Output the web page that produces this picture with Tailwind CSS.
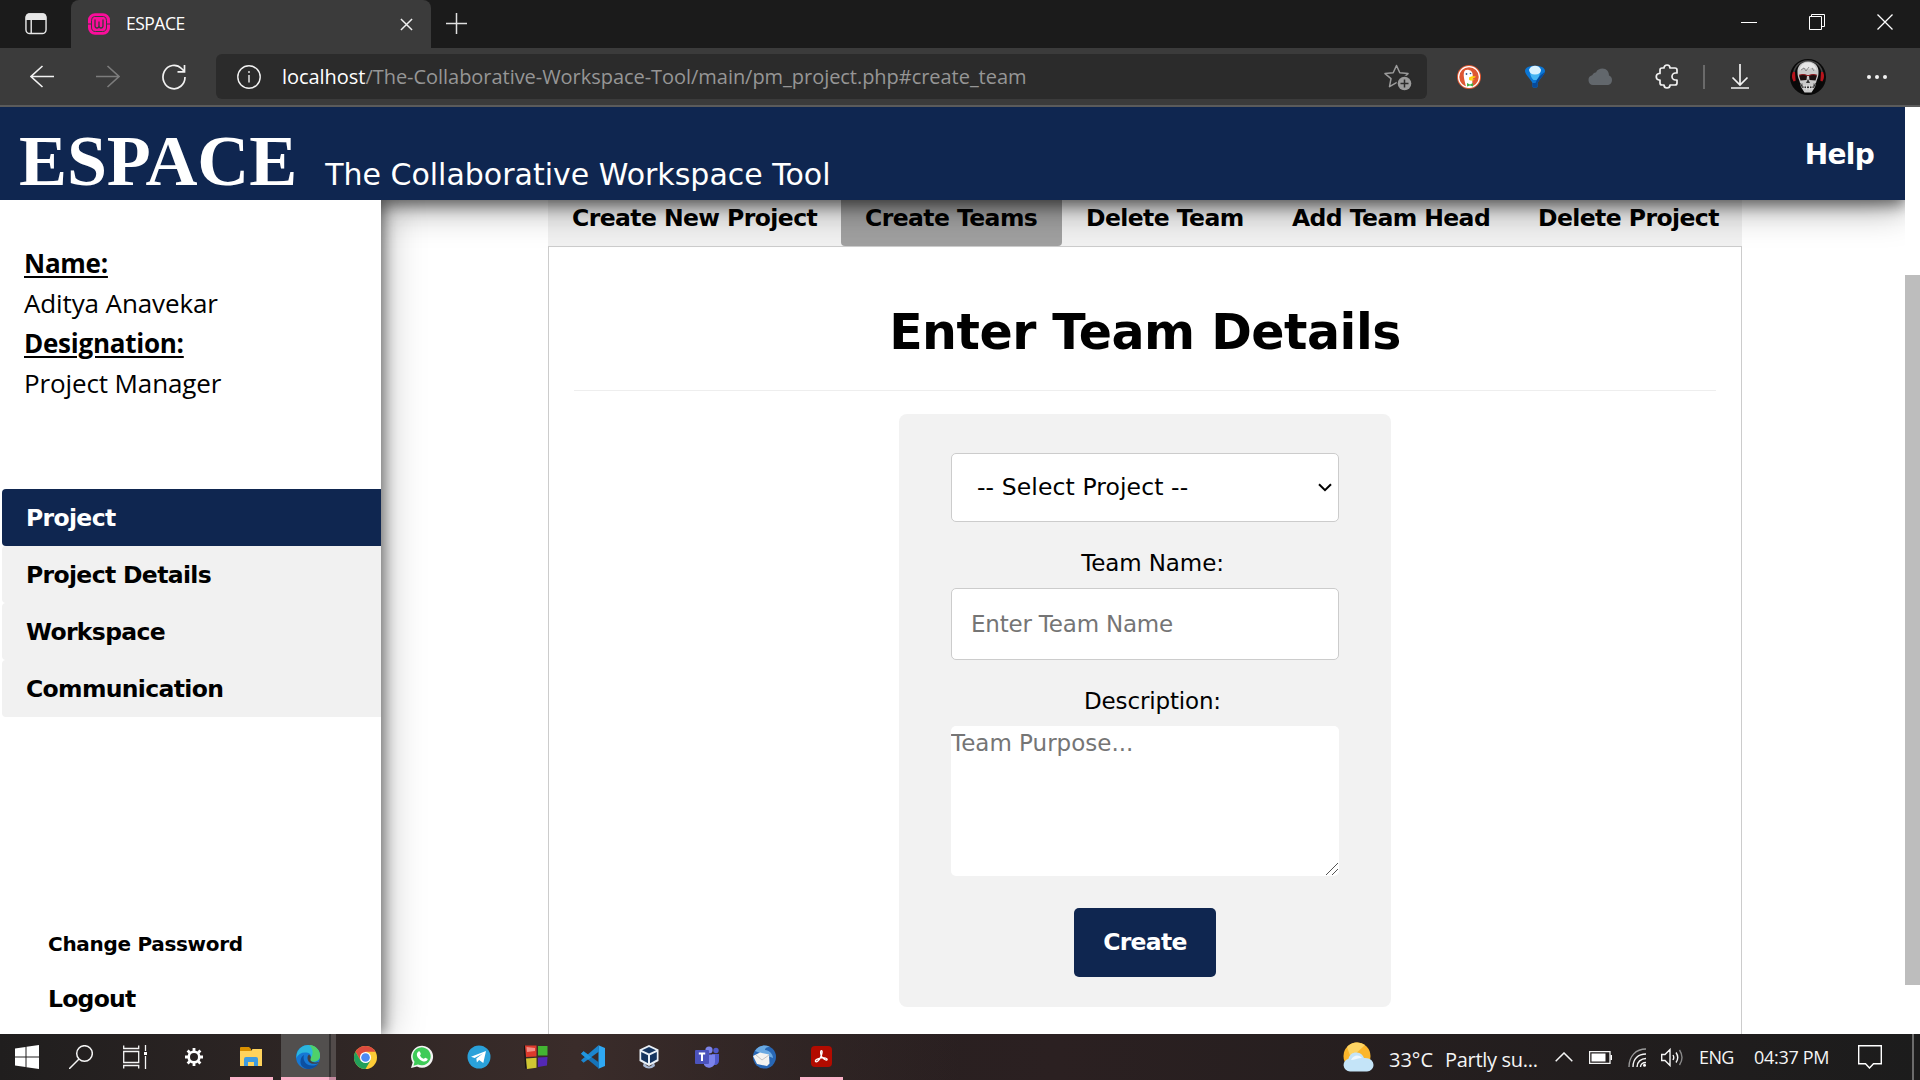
<!DOCTYPE html>
<html lang="en">
<head>
<meta charset="utf-8">
<title>ESPACE</title>
<script src="https://cdn.jsdelivr.net/npm/@tailwindcss/browser@4"></script>
</head>
<body class="h-[1080px] w-[1920px] overflow-hidden bg-white font-['DejaVu_Sans',sans-serif] text-black">
<div class="flex h-full flex-col">

  <!-- Browser tab strip -->
  <div class="flex h-12 shrink-0 bg-[#1b1b1b] font-['Open_Sans',sans-serif]">
    <div class="flex w-[71px] items-center pl-[25px]">
      <svg class="h-[22px] w-[22px]" viewBox="0 0 23 23" fill="none" stroke="#e6e6e6" stroke-width="1.5"><rect x="1" y="1" width="21" height="20.5" rx="4"/><path d="M1.500 4a3 3 0 0 1 3-3h14a3 3 0 0 1 3 3v2.500h-20z" fill="#e6e6e6"/><path d="M6.500 6v15.500"/></svg>
    </div>
    <div class="flex w-[360px] items-center rounded-t-lg bg-[#3b3b3b] pr-[18px] pb-px pl-4">
      <svg class="h-6 w-6" viewBox="0 0 24 24" fill="none"><path d="M8 1.200h8a7 7 0 0 1 7 7v7.600a7 7 0 0 1-7 7H8a7 7 0 0 1-7-7V8.200a7 7 0 0 1 7-7z" fill="#fb0d9b"/><path d="M7.500 4.500h9q3 0 3 4v6.500q0 4.500-4 4.500h-7q-4 0-4-4.500V8.500q0-4 3-4z" stroke="#3b3b3b" stroke-width="1"/><path d="M8 7.500v6q0 2.500 2 2.500t2-2.500v-4 4q0 2.500 2 2.500t2-2.500v-6" stroke="#3b3b3b" stroke-width="1.300"/><path d="M0 12h4.500M19.500 12H24" stroke="#3b3b3b" stroke-width="1"/></svg>
      <span class="ml-[15px] grow text-[17.5px] tracking-[-0.5px] text-white">ESPACE</span>
      <svg class="mt-px h-[13px] w-[13px]" viewBox="0 0 14 14" stroke="#f0f0f0" stroke-width="1.600"><path d="M1 1l12 12M13 1L1 13"/></svg>
    </div>
    <div class="flex grow items-center pb-px pl-[15px]">
      <svg class="h-[21px] w-[21px]" viewBox="0 0 21 21" stroke="#e0e0e0" stroke-width="1.500"><path d="M10.500 0v21M0 10.500h21"/></svg>
    </div>
    <div class="flex items-center gap-[52px] pr-[27px] pb-[5px]">
      <svg class="h-4 w-4" viewBox="0 0 16 16" stroke="#fff"><path d="M0 8.500h16"/></svg>
      <svg class="h-4 w-4" viewBox="0 0 16 16" stroke="#fff" fill="none"><path d="M.5 2.500h12v13H.5zM2.500 2.500V.5h13v12h-3"/></svg>
      <svg class="h-4 w-4" viewBox="0 0 16 16" stroke="#fff" stroke-width="1.300"><path d="M.5.5l15 15M15.500.5l-15 15"/></svg>
    </div>
  </div>

  <!-- Browser toolbar -->
  <div class="flex h-[59px] shrink-0 items-center border-b-2 border-[#5b5b5b] bg-[#3b3b3b] font-['Open_Sans',sans-serif]">
    <div class="flex w-[216px] items-center pl-[30px]">
      <svg class="h-6 w-6" viewBox="0 0 24 24" fill="none" stroke="#f2f2f2" stroke-width="1.600"><path d="M24 11.500H1M12.500 1L1 11.500l11.500 10.500"/></svg>
      <svg class="ml-[42px] h-6 w-6" viewBox="0 0 24 24" fill="none" stroke="#7c7c7c" stroke-width="1.600"><path d="M0 11.500h23M11.500 1L23 11.500 11.500 22"/></svg>
      <svg class="ml-[42px] h-[26px] w-6" viewBox="0 0 24 26" fill="none" stroke="#f2f2f2" stroke-width="1.700"><path d="M23 13a11 11.700 0 1 1-3.500-8.500L22.500 7.500M22.500 1v6.800h-7"/></svg>
    </div>
    <div class="flex h-[45px] w-[1211px] items-center rounded-md bg-[#2b2b2b] pr-[15px] pl-[21px]">
      <svg class="h-6 w-6" viewBox="0 0 24 24" fill="none" stroke="#f2f2f2" stroke-width="1.400"><circle cx="12" cy="12" r="11.200"/><path d="M12 10v7.500"/><circle cx="12" cy="7" r=".6" fill="#f2f2f2" stroke-width=".8"/></svg>
      <span class="ml-[21px] grow text-[20px] tracking-[-0.04px] text-[#969696]"><span class="text-white">localhost</span>/The-Collaborative-Workspace-Tool/main/pm_project.php#create_team</span>
      <svg class="h-7 w-7" viewBox="0 0 28 28" fill="none"><path d="M12.500 2.500l3.300 7.200 8.200.9-6 5.500 1.500 7.500-7-4-7 4 1.500-8L1 10.600l8.200-.9z" stroke="#9b9b9b" stroke-width="1.500" stroke-linejoin="round"/><circle cx="20.500" cy="20.500" r="8" fill="#2b2b2b"/><circle cx="20.500" cy="20.500" r="6.800" fill="#9b9b9b"/><path d="M20.500 16.500v8M16.500 20.500h8" stroke="#2b2b2b" stroke-width="1.500"/></svg>
    </div>
    <div class="flex grow items-center pl-[30px]">
      <svg class="h-6 w-6" viewBox="0 0 24 24"><circle cx="12" cy="12" r="12" fill="#de5833"/><circle cx="12" cy="12" r="10.400" fill="none" stroke="#fff" stroke-width="1.300"/><path d="M9 21.800C8 17 6 11 7 7.500 7.500 5 9.500 4.500 12 5c3 .7 4 3 3.700 6-.2 3-.7 6-.2 11-2 .7-4.500.6-6.500-.2z" fill="#fff"/><circle cx="9.500" cy="9" r=".9" fill="#2d5a91"/><circle cx="13.500" cy="8.500" r=".8" fill="#2d5a91"/><path d="M12 12.500c2-1.300 5-1.500 7-.8-1 1.300-4 1.800-5 2.300 1.500.6 3 .3 4 .6-2 1.600-5.500 1-6 0z" fill="#fdd20a"/><path d="M10 18l3 1.500 3-1.500v3.500l-3-1-3 1z" fill="#43b045"/></svg>
      <svg class="ml-11 h-6 w-5" viewBox="0 0 20 24"><path d="M0 6C0 2.500 4.500.8 10 .8S20 2.500 20 6c0 3.500-5.500 8-7.500 12v3.500q0 1-1 1h-3q-1 0-1-1V18C5.500 14 0 9.500 0 6z" fill="#0b76d4"/><path d="M4 4.500C5.500 1.800 7.500.8 10 .8s4.500 1 6 3.700C16 8 13 11 10 11S4.500 8 4 4.500z" fill="#d9f2ff"/><path d="M5 8q5 3 10 0-1 5-3.500 7h-3Q6 13 5 8z" fill="#45b4f2"/><path d="M19.800 7c-.8 3.200-5.500 7.500-7.300 11v3.500q0 1-1 1h-3q-1 0-1-1V18h3q2-6 9.300-11z" fill="#074a9b"/></svg>
      <svg class="ml-[43px] h-6 w-6" viewBox="0 0 24 24" fill="#62676c"><path d="M5 20a5 5 0 0 1-.8-9.800C5.500 8 7 7.500 8 7.500c1-3 4-4 6.500-4 4 0 6.500 3 6.500 7 2 .8 3 2.500 3 4.500 0 3-2 5-5 5z"/></svg>
      <svg class="ml-[43px] h-[25px] w-6" viewBox="0 0 24 25" fill="none" stroke="#f2f2f2" stroke-width="1.700" stroke-linejoin="round"><path d="M9 4a3 3 0 1 1 6 0h5q2 0 2 2v3h-1.500a3.500 3.500 0 0 0 0 7H22v3q0 2-2 2h-5a3 3 0 1 1-6 0H7q-2 0-2-2v-3H4a3.300 3.300 0 0 1 0-6.500h1V6q0-2 2-2z"/></svg>
      <div class="ml-6 h-6 w-[2px] bg-[#6a6a6a]"></div>
      <svg class="ml-[25px] h-[25px] w-5" viewBox="0 0 20 25" fill="none" stroke="#f2f2f2" stroke-width="1.700"><path d="M10 0v20.500M2.500 13.500l7.500 7.500 7.500-7.500M1 24h18"/></svg>
      <svg class="ml-10 h-9 w-9" viewBox="0 0 36 36"><circle cx="18" cy="18" r="18" fill="#090909"/><path d="M4 20C2 10 8 2 18 2s16 8 14 18" fill="none" stroke="#444" stroke-width="1.500"/><path d="M2.800 13q-2 5.500.8 9.500l2-.8-.6-8.700zM33.200 13q2 5.500-.8 9.500l-2-.8.6-8.700z" fill="#b7141c"/><path d="M18 2.500c7 0 11 5 10.500 11 0 3-.5 5-2 8.500l-1.500 6-3.500 5.500h-7L11 28l-1.500-6c-1.500-3.500-2-5.500-2-8.500C7 7.500 11 2.500 18 2.500z" fill="#c9c9c9"/><path d="M18 3.500c5 0 8 3.500 8.500 8l-4-3-4.500 2-4.500-2-4 3c.5-4.500 3.500-8 8.500-8z" fill="#e6e6e6"/><path d="M9 16.500q4-2 8 0l-.5 4.500-6 .5zM27 16.500q-4-2-8 0l.5 4.500 6 .5z" fill="#1a1010"/><path d="M18 20l-2 4h4zM9.500 23l4 4.500h9l4-4.500-2.500 6h-12z" fill="#333"/><path d="M9 16.200q4.500-1.500 8 .3h2q4-1.800 8-.3" fill="none" stroke="#8d1a1f" stroke-width="1.200"/><path d="M14 26v4M16.500 26v5M19.500 26v5M22 26v4" stroke="#ddd" stroke-width="1"/><path d="M11 11l3-2 2 3 3-4M22 9l2 3M12 24l1 5M24 24l-1 5" fill="none" stroke="#777" stroke-width=".8"/></svg>
      <svg class="ml-[41px] h-1 w-5" viewBox="0 0 20 4" fill="#f2f2f2"><circle cx="2" cy="2" r="2"/><circle cx="10" cy="2" r="2"/><circle cx="18" cy="2" r="2"/></svg>
    </div>
  </div>

  <!-- Web page -->
  <div class="flex min-h-0 grow overflow-hidden">
    <div class="flex w-[1905px] flex-col overflow-hidden">
      <header class="relative z-10 flex h-[93px] shrink-0 justify-between bg-[#0f2650] pr-[31px] pl-[19px] text-white shadow-[0_5px_14px_rgba(0,0,0,.5),0_8px_36px_rgba(0,0,0,.36)]">
        <div class="flex items-baseline">
          <span class="font-['Liberation_Serif',serif] text-[72px] leading-[108px] font-bold tracking-[-0.1px]">ESPACE</span>
          <span class="ml-[28px] text-[30px]">The Collaborative Workspace Tool</span>
        </div>
        <a class="text-[28px] leading-[96px] font-bold tracking-[-0.7px]">Help</a>
      </header>

      <div class="flex min-h-0 grow">
        <!-- Sidebar -->
        <aside class="relative z-20 flex w-[381px] shrink-0 flex-col bg-white pt-[43px] shadow-[4px_0_12px_rgba(0,0,0,.42),6px_0_36px_rgba(0,0,0,.25)] [clip-path:inset(0_-80px_0_0)]">
          <div class="h-[246px] pl-6 font-['Open_Sans',sans-serif] text-[26px] leading-10 tracking-[-0.12px]">
            <p class="font-bold tracking-[-0.25px] underline decoration-2 underline-offset-[3px]">Name:</p>
            <p>Aditya Anavekar</p>
            <p class="font-bold tracking-[-0.25px] underline decoration-2 underline-offset-[3px]">Designation:</p>
            <p>Project Manager</p>
          </div>
          <nav class="flex flex-col pl-[2px] text-[23.5px] leading-[58px] font-bold tracking-[-0.66px]">
            <a class="h-[57px] rounded-l bg-[#0f2650] pl-6 text-white">Project</a>
            <a class="h-[57px] rounded-l bg-[#f1f1f1] pl-6">Project Details</a>
            <a class="h-[57px] rounded-l bg-[#f1f1f1] pl-6">Workspace</a>
            <a class="h-[57px] rounded-l bg-[#f1f1f1] pl-6">Communication</a>
          </nav>
          <div class="mt-auto flex flex-col pb-[7px] pl-12 font-bold">
            <a class="text-[20px] leading-[54px] tracking-[-0.3px]">Change Password</a>
            <a class="text-[23.5px] leading-[56px] tracking-[-0.75px]">Logout</a>
          </div>
        </aside>

        <!-- Content -->
        <main class="ml-[167px] flex w-[1194px] flex-col">
          <div class="flex h-[46px] shrink-0 bg-[#f1f1f1] text-[23.5px] leading-9 font-bold tracking-[-0.58px]">
            <a class="w-[293px] pl-6">Create New Project</a>
            <a class="w-[221px] rounded-b bg-[#a0a0a0] pl-6">Create Teams</a>
            <a class="w-[206px] pl-6">Delete Team</a>
            <a class="w-[246px] pl-6">Add Team Head</a>
            <a class="pl-6">Delete Project</a>
          </div>
          <section class="grow border border-b-0 border-[#ccc] px-[25px] pt-[56px]">
            <h1 class="text-center text-[49px] leading-[60px] font-bold tracking-[-0.5px]">Enter Team Details</h1>
            <hr class="mt-[27px] border-[#eee]">
            <form class="mx-auto mt-[23px] flex h-[593px] w-[492px] flex-col items-center rounded-lg bg-[#f2f2f2] pt-[39px] text-[23px]">
              <div class="relative">
                <select class="block h-[69px] w-[388px] appearance-none rounded-[5px] border border-[#ccc] bg-white pt-px pl-[25px] text-[23.5px] tracking-[0.1px]"><option>-- Select Project --</option></select>
                <svg class="absolute top-[30px] right-[7px] h-[9px] w-[14px]" viewBox="0 0 14 9" fill="none" stroke="#000" stroke-width="2"><path d="M1 1.200l6 6 6-6"/></svg>
              </div>
              <label class="flex h-[66px] items-center pt-[16px] pl-[15px] tracking-[-0.1px]">Team Name:</label>
              <input class="block h-[72px] w-[388px] rounded-[5px] border border-[#ccc] bg-white pl-[19px] tracking-[-0.2px] placeholder-[#757575]" placeholder="Enter Team Name">
              <label class="flex h-[66px] items-center pt-[16px] pl-[15px] tracking-[-0.15px]">Description:</label>
              <div class="relative">
                <textarea class="block h-[150px] w-[388px] resize-none rounded-[5px] bg-white placeholder-[#757575]" placeholder="Team Purpose..."></textarea>
                <svg class="absolute right-px bottom-px h-3 w-3" viewBox="0 0 12 12" fill="none" stroke="#555"><path d="M0 12L12 0M6 12l6-6"/></svg>
              </div>
              <button type="button" class="mt-8 h-[69px] w-[142px] rounded-[5px] bg-[#0f2650] pt-px text-[23.5px] font-bold tracking-[-0.7px] text-white">Create</button>
            </form>
          </section>
        </main>
      </div>
    </div>
    <!-- Page scrollbar -->
    <div class="w-[15px] bg-white pt-[168px]"><div class="h-[709.5px] bg-[#bdbdbd]"></div></div>
  </div>

  <!-- Taskbar -->
  <div class="flex h-[46px] shrink-0 bg-linear-to-r from-[#1e1c1c] via-[#2b2021] via-55% to-[#1c1c1c] font-['Open_Sans',sans-serif] text-[#f5f5f5]">
    <div class="flex w-full bg-linear-to-r from-[#201e1e] from-0% via-[#3a2c2a] via-30% to-transparent to-50%">
      <div class="flex w-[230px] items-center pl-[15px]">
        <svg class="h-6 w-6" viewBox="0 0 24 24" fill="#fff"><path d="M0 3.500l10.500-1.500v9.500H0zM11.500 1.800L24 0v11.500H11.500zM0 12.500h10.500V22L0 20.500zM11.500 12.500H24V24l-12.500-1.800z"/></svg>
        <svg class="ml-[30px] h-6 w-6" viewBox="0 0 24 24" fill="none" stroke="#f5f5f5" stroke-width="1.500"><circle cx="15.500" cy="8.500" r="7.800"/><path d="M10 14L0 24"/></svg>
        <svg class="ml-[30px] h-6 w-6" viewBox="0 0 24 24" fill="none" stroke="#f5f5f5" stroke-width="1.300"><path d="M.7.5v3h15v-3M.7 6.500h15v11H.7zM.7 23.500v-3h15v3M22.500 0v6M22.500 11v13"/><path d="M21 7h3v3h-3z" fill="#fff" stroke="none"/></svg>
        <svg class="ml-[38px] h-[18px] w-[18px]" viewBox="0 0 18 18" fill="none" stroke="#fff"><circle cx="9" cy="9" r="5.300" stroke-width="2.600"/><path d="M9 0v3M9 15v3M0 9h3M15 9h3M2.600 2.600l2.200 2.200M13.200 13.200l2.200 2.200M2.600 15.400l2.200-2.200M13.200 4.800l2.200-2.200" stroke-width="2.800"/></svg>
      </div>
      <div class="flex w-[43px] items-center justify-center border-b-[3px] border-[#fbb1c8] pt-[2px] pr-[2px]">
        <svg class="h-[19px] w-[22px]" viewBox="0 0 22 19"><path d="M0 1q0-1 1-1h8l2 2v3H0z" fill="#d99000"/><path d="M0 4h11l1.500-2H22v17H0z" fill="#ffd35c"/><path d="M4 19v-7q0-2 2-2h10q2 0 2 2v7h-4v-4H8v4z" fill="#3f9be0"/></svg>
      </div>
      <div class="ml-2 flex w-12 items-center justify-center border-b-[3px] border-[#fbb1c8] bg-[#524f4e] pt-[3px] pl-[6px]">
        <svg class="h-6 w-6" viewBox="0 0 24 24"><circle cx="12" cy="12" r="12" fill="#1678d4"/><path d="M1 8C3 3 7 0 12 0c7 0 12 5 12 10.500 0 4-3 6-6.500 6-3 0-4.500-1.200-3-3 1.500-2.500 0-5.500-4-6C6 7 2 9 .3 13z" fill="#2bb6dd"/><path d="M13 0c7 .5 11 5 11 10.500 0 4-3 6-6.500 6-3 0-4.500-1.200-3-3C18 9 17 3 13 0z" fill="#4fd16a"/><path d="M8 10c-2 6 3 11 8.500 10.500 2.500 0 4-.7 5.500-1.500-2 3.500-6 5-10 5-5-.5-8-4-7.500-8C4.800 13 6 11 8 10z" fill="#0c4fa0"/><path d="M13 9.500c-2 1.500-2 5 0 7.500 2 2 6 2.500 9.500 1l.5-1c-2 .8-9 1-8.500-3 .5-1.500.5-3-1.500-4.500z" fill="#434142"/></svg>
      </div>
      <div class="w-[2px] border-b-[3px] border-[#c58ba0] bg-[#343131]"></div>
      <div class="w-[5px] border-b-[3px] border-[#c58ba0] bg-[#524b4a]"></div>
      <div class="flex w-[464px] items-center pl-[18px]">
        <svg class="h-[23px] w-[23px]" viewBox="0 0 24 24"><circle cx="12" cy="12" r="12" fill="#fccb36"/><path d="M1.600 6A12 12 0 0 1 22.400 6H12l-5.200 9z" fill="#dc4b3e"/><path d="M1.600 6A12 12 0 0 0 12 24l5.200-9H6.800z" fill="#22a05b"/><circle cx="12" cy="12" r="5.800" fill="#fff"/><circle cx="12" cy="12" r="4.500" fill="#4a8af4"/></svg>
        <svg class="ml-[33px] h-6 w-6" viewBox="0 0 24 24"><path d="M1 23l1.700-5.500A11 11 0 1 1 7 21.500z" fill="#f3f3f3"/><path d="M3.500 20.700l1-4A9 9 0 1 1 8 19.500z" fill="#3ecb58"/><path d="M8.500 6.500c1-.6 1.500 0 2.300 2.300.2.600-.9 1.500-.7 1.900.8 1.500 2 2.500 3.500 3.100.5.200 1.200-1.300 1.800-1.100 2.500 1 2.500 1.200 2 2.400-.8 1.500-3 1.800-5.400.8-2.500-1-4.500-3.500-5-5.200-.5-1.900.3-3.500 1.500-4.200z" fill="#fff"/></svg>
        <svg class="ml-[33px] h-6 w-6" viewBox="0 0 24 24"><circle cx="12" cy="12" r="11.500" fill="#2aa1da"/><path d="M4 11.800L19 6l-2.700 12-4.200-3-2.200 2.500-.6-4 6.500-5L7.700 13z" fill="#fff"/></svg>
        <svg class="ml-[33px] h-6 w-6" viewBox="0 0 24 24"><path d="M1 .5h11.500v11L2 12z" fill="#dd3a2c"/><path d="M14 1h9.500v9.500H14z" fill="#43b532"/><path d="M2 13.500l10.500-.7v10L3 24z" fill="#d0c733"/><path d="M14 12.500l9.500-.5-.5 8.500-9 1.500z" fill="#5428b5"/><path d="M.3.500l1.500 23" stroke="#111" stroke-width="1"/><path d="M2.500 2L11 3v3L3 7z" fill="#f28f85"/></svg>
        <svg class="ml-[33px] h-6 w-6" viewBox="0 0 24 24"><path d="M17.500.2L24 3v18l-6.500 2.800z" fill="#2fa8f2"/><path d="M17.500.2L0 15.200l2.500 2.600L18 6.500z" fill="#1c86cf"/><path d="M0 8.800l2.500-2.600L18 17.500v6.300z" fill="#1673b8"/><path d="M0 8.800l2.500-2.600 8 6-3.500 2.500z" fill="#2196dd"/></svg>
        <svg class="ml-[33px] h-6 w-[22px]" viewBox="0 0 22 24"><path d="M6 17q5 9 10 0l1 4q-6 5-12 0z" fill="#a8b9d4"/><path d="M11 0l9.500 4.500V16L11 21 1.500 16V4.500z" fill="#e9f0f7"/><path d="M11 2l7 3.200-7 3.300-7-3.300z" fill="#14345f"/><path d="M3.200 7l6.800 3.200v8L3.200 14.500z" fill="#14345f"/><path d="M18.800 7L12 10.200v8l6.800-3.700z" fill="#14345f"/></svg>
        <svg class="ml-[35px] h-6 w-6" viewBox="0 0 24 24"><circle cx="21" cy="5.500" r="2.700" fill="#5059c9"/><path d="M17 9h7v7a4 4 0 0 1-6 3.500z" fill="#5059c9"/><circle cx="14" cy="5" r="3.600" fill="#7b83eb"/><path d="M9 9.500h11V17a6 6 0 0 1-11 3z" fill="#7b83eb"/><rect y="5" width="14" height="14" rx="1" fill="#4b53bc"/><path d="M3.800 8.500h6.400M7 8.500v7.500" stroke="#fff" stroke-width="2"/></svg>
        <svg class="ml-[33px] h-6 w-6" viewBox="0 0 24 24"><circle cx="12.500" cy="12" r="11.500" fill="#2867b5"/><path d="M3 6C6 1 12-1 18 2c-4 0-5 1.500-5 3 4 0 8 4 8 8z" fill="#6aa9e2"/><path d="M1 11l7-3.500 9 2 .5 9L15 21l-10-2z" fill="#f3f3f1"/><path d="M4 10l6 5 7-5" fill="none" stroke="#c4c4c4" stroke-width="1"/></svg>
      </div>
      <div class="flex w-[43px] items-center justify-center border-b-[3px] border-[#fbb1c8] pt-px pr-px">
        <svg class="h-[21px] w-[21px]" viewBox="0 0 21 21"><rect width="21" height="21" rx="4" fill="#b30b00"/><path d="M4.500 15.500c-.8-1.500 3.500-3.500 6-3.700 3-.3 6 .5 5.700 1.800-.6 1.500-5-1.200-6-4-.6-2-1-4.700.1-5 1.500-.2.800 4-1 7.300-1.500 2.800-4 5-4.800 3.600z" fill="none" stroke="#fff" stroke-width="1.300"/></svg>
      </div>
      <div class="ml-auto flex items-center">
        <svg class="h-[30px] w-[31px]" viewBox="0 0 31 30"><circle cx="14" cy="14" r="13.500" fill="#fbb62b"/><path d="M4 5a13.500 13.500 0 0 1 18-2L8 16z" fill="#fdd463"/><path d="M7 29.500a6.500 6.500 0 0 1-1.500-12.800C6.500 12 10.500 10 14 10.500c3.500.3 6 2.500 7 5.500 6-.5 9.500 3 9.500 7 0 3.500-3 6.500-6.500 6.500z" fill="#c4e4f8"/><path d="M8 18c2-5 8-6 11-2-4 0-8 2-11 2z" fill="#eff8fe"/></svg>
        <span class="ml-[15px] w-[56px] pt-[5px] text-[20px]">33°C</span>
        <span class="w-[110px] pt-[5px] text-[20px] tracking-[-0.3px] whitespace-nowrap">Partly su...</span>
        <svg class="h-[10px] w-[18px]" viewBox="0 0 18 10" fill="none" stroke="#f5f5f5" stroke-width="1.500"><path d="M.7 9.300L9 1l8.300 8.300"/></svg>
        <svg class="ml-4 h-[13px] w-[23px]" viewBox="0 0 23 13"><path d="M.6.6h20.400v11.800H.6z" fill="none" stroke="#f5f5f5" stroke-width="1.300"/><path d="M2.500 2.500h14v8h-14zM21.500 4H23v5h-1.500z" fill="#fff"/></svg>
        <svg class="ml-4 h-[19px] w-[18px]" viewBox="0 0 18 19" fill="none" stroke="#f5f5f5" stroke-width="1.400"><path d="M1 19C1 8 8 1 18 1" stroke="#9a9a9a"/><path d="M5 19c0-8 5-13 13-13M9 19c0-5 4-8.500 9-8.500M12.500 19c0-2.500 2-4.500 5.500-4.500"/><circle cx="16.500" cy="17.300" r="1.500" fill="#fff" stroke="none"/></svg>
        <svg class="ml-[15px] h-[19px] w-[22px]" viewBox="0 0 22 19" fill="none" stroke="#f5f5f5" stroke-width="1.400"><path d="M.7 6.500H4L9 1.500v16l-5-5H.7zM12 7q1.500 2.500 0 5M15 4.500q3.500 5 0 10"/><path d="M18.500 2q5 7.500 0 15" stroke="#888"/></svg>
        <span class="ml-4 w-[55px] text-[18px] tracking-[-0.6px]">ENG</span>
        <span class="w-[104px] text-[18px] tracking-[-0.3px] whitespace-nowrap">04:37 PM</span>
        <svg class="h-6 w-6" viewBox="0 0 24 24" fill="none" stroke="#fff" stroke-width="1.400"><path d="M.7.7h22.600v18H15.500L11.500 23l-4-4.300H.7z"/></svg>
        <div class="mr-[6px] ml-[30px] h-[46px] w-[2px] bg-[#6b6b6b]"></div>
      </div>
    </div>
  </div>
</div>
</body>
</html>
